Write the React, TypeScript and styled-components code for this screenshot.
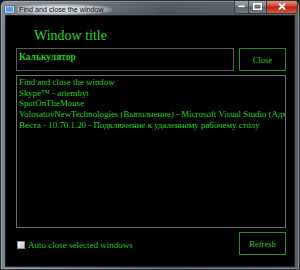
import React from 'react';
import styled, { createGlobalStyle } from 'styled-components';

const GlobalStyle = createGlobalStyle`
  html, body {
    margin: 0;
    padding: 0;
    background: #1a1d1f;
  }
`

const items = [
    'Find and close the window',
    'Skype™ - artembyt',
    'SpotOnTheMouse',
    'VolosatovNewTechnologies (Выполнение) - Microsoft Visual Studio (Администратор)',
    'Веста - 10.70.1.20 - Подключение к удаленному рабочему столу',
]

const App: React.FC = () => {
    return (
        <>
            <GlobalStyle />
            <Window>
                <TitleBar>
                    <AppIcon viewBox="0 0 12 10">
                        <rect x="0.5" y="0.5" width="11" height="8" fill="#cfe3f5" stroke="#4b6c8c" />
                        <rect x="2" y="2" width="8" height="5" fill="#5b9bd5" />
                        <rect x="4" y="8.5" width="4" height="1.5" fill="#4b6c8c" />
                    </AppIcon>
                    <TitleText>Find and close the window</TitleText>
                    <Controls>
                        <CtrlButton>
                            <svg width="7" height="3" viewBox="0 0 7 3">
                                <rect x="0" y="0" width="7" height="2.5" fill="#fff" stroke="#333" strokeWidth="0.5" />
                            </svg>
                        </CtrlButton>
                        <CtrlButton $wide>
                            <svg width="9" height="7" viewBox="0 0 9 7">
                                <rect x="0.75" y="0.75" width="7.5" height="5.5" fill="none" stroke="#fff" strokeWidth="1.5" />
                            </svg>
                        </CtrlButton>
                        <CtrlButton $close>
                            <svg width="8" height="7" viewBox="0 0 8 7">
                                <path d="M1 0.5 L7 6.5 M7 0.5 L1 6.5" stroke="#fff" strokeWidth="1.8" />
                            </svg>
                        </CtrlButton>
                    </Controls>
                </TitleBar>
                <Client>
                    <Heading>Window title</Heading>
                    <Row>
                        <TextBox>Калькулятор</TextBox>
                        <GreenButton>Close</GreenButton>
                    </Row>
                    <ListBox>
                        {items.map((item, index) =>
                            <ListItem key={index}>{item}</ListItem>
                        )}
                    </ListBox>
                    <BottomRow>
                        <CheckLabel>
                            <CheckBox />
                            Auto close selected windows
                        </CheckLabel>
                        <GreenButton>Refresh</GreenButton>
                    </BottomRow>
                </Client>
            </Window>
        </>
    )
}

const Window = styled.div`
  width: 300px;
  height: 270px;
  box-sizing: border-box;
  display: flex;
  flex-direction: column;
  border: 1px solid #2b3033;
  border-radius: 6px 6px 0 0;
  background:
    linear-gradient(to bottom, rgba(255, 255, 255, 0.12), rgba(255, 255, 255, 0) 20px),
    linear-gradient(to right, #7d868c 0%, #5e666b 30%, #434c52 55%, #4d5459 80%, #5a6065 100%);
  box-shadow: inset 0 0 0 1px rgba(200, 210, 215, 0.35);
  overflow: hidden;
`
const TitleBar = styled.div`
  height: 14px;
  display: flex;
  align-items: center;
  position: relative;
  padding-left: 3px;
`
const AppIcon = styled.svg`
  width: 11px;
  height: 10px;
  margin-top: 3px;
`
const TitleText = styled.div`
  margin-left: 3px;
  margin-top: 3px;
  font-family: "Liberation Sans", Arial, sans-serif;
  font-size: 7.2px;
  color: #111;
  padding: 1px 8px 1px 1px;
  background: radial-gradient(ellipse at 45% 50%, rgba(220, 226, 230, 0.95) 30%, rgba(200, 206, 210, 0.6) 60%, rgba(200, 206, 210, 0) 78%);
`
const Controls = styled.div`
  position: absolute;
  top: -1px;
  right: 1px;
  display: flex;
  border: 1px solid #3a3f42;
  border-top: none;
  border-radius: 0 0 4px 4px;
  overflow: hidden;
`
const CtrlButton = styled.div<{ $wide?: boolean; $close?: boolean }>`
  width: ${p => p.$close ? '30px' : p.$wide ? '17px' : '13px'};
  height: 13px;
  display: flex;
  align-items: center;
  justify-content: center;
  border-left: ${p => p.$close || p.$wide ? '1px solid #3a3f42' : 'none'};
  background: ${p => p.$close
    ? 'linear-gradient(to bottom, #e8a090 0%, #d04a36 45%, #b8261a 55%, #d8553c 100%)'
    : 'linear-gradient(to bottom, #a6adb2 0%, #7b8388 45%, #5f676c 55%, #6f777c 100%)'};
`
const Client = styled.div`
  flex: 1;
  margin: 0 4px 4px 4px;
  background: #000;
  border: 1px solid #1e2224;
  display: flex;
  flex-direction: column;
  padding: 0 8px 11px 10px;
  font-family: "Liberation Serif", "Times New Roman", serif;
  color: #21d321;
`
const Heading = styled.div`
  height: 32px;
  box-sizing: border-box;
  padding: 13px 0 0 18px;
  font-size: 14px;
  line-height: 14px;
  color: #27d527;
`
const Row = styled.div`
  display: flex;
  gap: 5px;
  height: 23px;
`
const TextBox = styled.div`
  flex: 1;
  box-sizing: border-box;
  border: 1px solid #5a5a5a;
  padding: 2px 2px;
  font-size: 9.5px;
  font-weight: bold;
  line-height: 12px;
  color: #22cc22;
`
const GreenButton = styled.div`
  width: 47px;
  align-self: stretch;
  box-sizing: border-box;
  border: 1px solid #2a8c2a;
  display: flex;
  align-items: center;
  justify-content: center;
  font-size: 8.5px;
  color: #2fcf2f;
`
const ListBox = styled.div`
  margin-top: 4px;
  height: 153px;
  box-sizing: border-box;
  border: 1px solid #6e6e6e;
  padding: 1px 2px;
  overflow: hidden;
`
const ListItem = styled.div`
  font-size: 8.9px;
  line-height: 10.7px;
  white-space: nowrap;
  color: #22d322;
`
const BottomRow = styled.div`
  margin-top: 4px;
  height: 23px;
  display: flex;
  justify-content: space-between;
  align-items: center;
`
const CheckLabel = styled.div`
  display: flex;
  align-items: center;
  gap: 3px;
  margin: 3px 0 0 1px;
  font-size: 9px;
  color: #22c822;
`
const CheckBox = styled.div`
  width: 8px;
  height: 8px;
  box-sizing: border-box;
  border: 1px solid #8a8a8a;
  background: linear-gradient(135deg, #f2f2f2, #c8c8c8);
`

export default App
